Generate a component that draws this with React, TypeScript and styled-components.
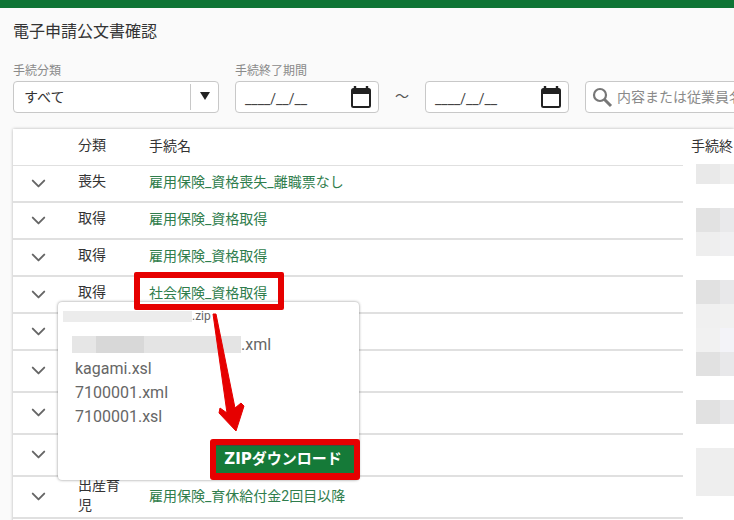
import React from "react";
import styled, { createGlobalStyle } from "styled-components";
import { ChevronDown } from "lucide-react";

const GlobalStyle = createGlobalStyle`
  html, body {
    margin: 0;
    padding: 0;
    background: #fafafa;
  }
  body {
    font-family: Roboto, "Noto Sans CJK JP", sans-serif;
    color: #333;
  }
`;

const Page = styled.div`
  position: relative;
  width: 734px;
  height: 520px;
  overflow: hidden;
  background: #fafafa;
`;

const TopBar = styled.div`
  height: 8px;
  background: #0f7435;
`;

const Content = styled.div`
  padding: 14px 0 0 13px;
`;

const Title = styled.h1`
  margin: 0;
  height: 20px;
  font-size: 16px;
  font-weight: 400;
  line-height: 20px;
  color: #333;
`;

const Filters = styled.div`
  display: flex;
  align-items: flex-end;
  margin-top: 23px;
  width: 900px;
`;

const Field = styled.div`
  display: flex;
  flex: none;
  flex-direction: column;
  margin-right: 16px;
`;

const Label = styled.label`
  height: 12px;
  margin-bottom: 4px;
  font-size: 12px;
  line-height: 12px;
  color: #8a8a8a;
`;

const InputBox = styled.div<{ $width: number }>`
  display: flex;
  align-items: center;
  box-sizing: border-box;
  width: ${(p) => p.$width}px;
  height: 32px;
  background: #fff;
  border: 1px solid #c8c8c8;
  border-radius: 4px;
`;

const SelectValue = styled.span`
  flex: 1;
  padding: 0 0 2px 10px;
  font-size: 14px;
  color: #333;
`;

const SelectArrow = styled.span`
  display: flex;
  align-items: center;
  justify-content: center;
  width: 27px;
  height: 26px;
  border-left: 1px solid #c8c8c8;
  &::after {
    content: "";
    margin-top: -3px;
    border-left: 5px solid transparent;
    border-right: 5px solid transparent;
    border-top: 8px solid #222;
  }
`;

const DateBox = styled(InputBox)`
  justify-content: space-between;
  padding: 0 6px 0 9px;
`;

const DateMask = styled.span`
  font-size: 14px;
  padding-top: 3px;
  color: #444;
`;

const Tilde = styled.span`
  flex: none;
  width: 46px;
  margin-left: -16px;
  height: 32px;
  line-height: 30px;
  text-align: center;
  font-size: 14px;
  color: #555;
`;

const SearchIcon = styled.svg`
  flex: none;
  margin-left: 5px;
`;

const SearchHint = styled.span`
  margin-left: 4px;
  padding-bottom: 2px;
  font-size: 14px;
  color: #8a8a8a;
  white-space: nowrap;
`;

const TableCard = styled.div`
  display: flex;
  margin-top: 16px;
  width: 721px;
  height: 400px;
  background: #fff;
  box-shadow: 0 0 3px rgba(0, 0, 0, 0.28);
`;

const MainColumn = styled.div`
  width: 670px;
  flex: none;
`;

const SideColumn = styled.div`
  flex: 1;
  overflow: hidden;
`;

const SideHead = styled.div`
  height: 35px;
  padding-left: 8px;
  font-size: 14px;
  line-height: 34px;
  white-space: nowrap;
  color: #333;
`;

const Mosaic = styled.div<{ $gap?: number; $h: number; $a: string; $b: string }>`
  margin: ${(p) => p.$gap ?? 0}px 0 0 13px;
  height: ${(p) => p.$h}px;
  background: linear-gradient(
    to right,
    ${(p) => p.$a} 0,
    ${(p) => p.$a} 24px,
    ${(p) => p.$b} 24px
  );
`;

const HeadRow = styled.div`
  display: flex;
  align-items: center;
  box-sizing: border-box;
  height: 37px;
  padding-bottom: 1px;
  border-bottom: 1px solid #e0e0e0;
  font-size: 14px;
  color: #333;
`;

const Row = styled.div<{ $tall?: boolean }>`
  display: flex;
  align-items: center;
  box-sizing: border-box;
  height: ${(p) => (p.$tall ? 42 : 37)}px;
  padding-bottom: 1px;
  border-bottom: 2px solid #e0e0e0;
  font-size: 14px;
  color: #333;
`;

const ExpandCell = styled.div`
  display: flex;
  justify-content: center;
  width: 50px;
  color: #666;
`;

const TypeCell = styled.div`
  width: 42px;
  margin: 0 29px 4px 15px;
  flex: none;
  line-height: 20px;
`;

const NameCell = styled.div`
  margin-bottom: 4px;
  color: #2f7d4c;
  white-space: nowrap;
`;

const HeadName = styled.div`
  margin-bottom: 4px;
  color: #333;
`;

const Callout = styled.div`
  position: absolute;
  left: 134px;
  top: 272px;
  box-sizing: border-box;
  width: 150px;
  height: 38px;
  border: 6px solid #e60000;
  border-radius: 2px;
`;

const Popup = styled.div`
  position: absolute;
  left: 58px;
  top: 302px;
  box-sizing: border-box;
  width: 301px;
  height: 178px;
  padding: 6px 5px 0 5px;
  background: #fff;
  border-radius: 4px;
  box-shadow: 0 0 3px rgba(0, 0, 0, 0.45);
`;

const ZipName = styled.div`
  display: flex;
  align-items: center;
  height: 16px;
  font-size: 12px;
  color: #666;
`;

const Redacted = styled.span<{ $w: number }>`
  display: inline-block;
  width: ${(p) => p.$w}px;
  height: 11px;
  background: #ececec;
`;

const FileList = styled.ul`
  list-style: none;
  margin: 8px 0 0;
  padding: 0 0 0 12px;
`;

const FileItem = styled.li`
  display: flex;
  align-items: center;
  height: 24px;
  font-size: 16px;
  color: #666;
`;

const RedactedName = styled.span`
  width: 169px;
  height: 17px;
  margin-left: -3px;
  background: linear-gradient(
    to right,
    #e6e6e6 0,
    #e6e6e6 24px,
    #d8d8d8 24px,
    #d8d8d8 72px,
    #e4e4e4 72px
  );
`;

const ZipButton = styled.button`
  position: absolute;
  right: -1px;
  bottom: 0;
  box-sizing: border-box;
  width: 150px;
  height: 41px;
  padding: 0 4px 3px 0;
  background: #157a38;
  border: 6px solid #e60000;
  border-bottom-width: 7px;
  border-radius: 3px;
  box-shadow: inset 0 1px 0 #3d4f3c;
  font-family: "DejaVu Sans", "Noto Sans CJK JP", sans-serif;
  font-size: 15px;
  font-weight: 700;
  color: #fff;
`;

const Arrow = styled.svg`
  position: absolute;
  left: 210px;
  top: 310px;
`;

const CalendarIcon = () => (
  <svg width="22" height="24" viewBox="0 0 22 24">
    <path d="M5 1v3M17 1v3" stroke="#222" strokeWidth="2.4" fill="none" />
    <rect x="2" y="4" width="18" height="18" rx="1.5" fill="none" stroke="#222" strokeWidth="2" />
    <rect x="2" y="4" width="18" height="5" fill="#222" />
  </svg>
);

type RowData = { type?: string; name?: string; tall?: boolean };

const rows: RowData[] = [
  { type: "喪失", name: "雇用保険_資格喪失_離職票なし" },
  { type: "取得", name: "雇用保険_資格取得" },
  { type: "取得", name: "雇用保険_資格取得" },
  { type: "取得", name: "社会保険_資格取得" },
  {},
  { tall: true },
  { tall: true },
  { tall: true },
  { type: "出産育児", name: "雇用保険_育休給付金2回目以降", tall: true },
];

const mosaics = [
  { $h: 20, $a: "#e9e9e9", $b: "#efefef" },
  { $gap: 24, $h: 24, $a: "#e2e2e2", $b: "#e9e9eb" },
  { $h: 24, $a: "#eeeeee", $b: "#f0f0f2" },
  { $gap: 24, $h: 24, $a: "#e1e1e1", $b: "#e8e8ea" },
  { $h: 24, $a: "#f0f0f0", $b: "#f1f1f1" },
  { $h: 24, $a: "#f1f1f1", $b: "#f3f3f8" },
  { $h: 24, $a: "#e1e1e1", $b: "#e8e8ea" },
  { $gap: 24, $h: 24, $a: "#e1e1e1", $b: "#e8e8ea" },
  { $gap: 24, $h: 48, $a: "#eeeeee", $b: "#eeeeee" },
];

export default function App() {
  return (
    <Page>
      <GlobalStyle />
      <TopBar />
      <Content>
        <Title>電子申請公文書確認</Title>
        <Filters>
          <Field>
            <Label>手続分類</Label>
            <InputBox $width={206}>
              <SelectValue>すべて</SelectValue>
              <SelectArrow />
            </InputBox>
          </Field>
          <Field>
            <Label>手続終了期間</Label>
            <DateBox $width={144}>
              <DateMask>____/__/__</DateMask>
              <CalendarIcon />
            </DateBox>
          </Field>
          <Tilde>～</Tilde>
          <Field>
            <DateBox $width={144}>
              <DateMask>____/__/__</DateMask>
              <CalendarIcon />
            </DateBox>
          </Field>
          <Field>
            <InputBox $width={220}>
              <SearchIcon width="22" height="22" viewBox="0 0 22 22">
                <circle cx="9" cy="9" r="6" fill="none" stroke="#777" strokeWidth="2.2" />
                <path d="M13.5 13.5 L20 20" stroke="#777" strokeWidth="3" />
              </SearchIcon>
              <SearchHint>内容または従業員名</SearchHint>
            </InputBox>
          </Field>
        </Filters>
        <TableCard>
          <MainColumn>
            <HeadRow>
              <ExpandCell />
              <TypeCell>分類</TypeCell>
              <HeadName>手続名</HeadName>
            </HeadRow>
            {rows.map((row, i) => (
              <Row key={i} $tall={row.tall}>
                <ExpandCell>
                  <ChevronDown size={23} strokeWidth={2} />
                </ExpandCell>
                <TypeCell>{row.type}</TypeCell>
                <NameCell>{row.name}</NameCell>
              </Row>
            ))}
          </MainColumn>
          <SideColumn>
            <SideHead>手続終</SideHead>
            {mosaics.map((m, i) => (
              <Mosaic key={i} {...m} />
            ))}
          </SideColumn>
        </TableCard>
      </Content>
      <Popup>
        <ZipName>
          <Redacted $w={129} />
          .zip
        </ZipName>
        <FileList>
          <FileItem>
            <RedactedName />
            .xml
          </FileItem>
          <FileItem>kagami.xsl</FileItem>
          <FileItem>7100001.xml</FileItem>
          <FileItem>7100001.xsl</FileItem>
        </FileList>
        <ZipButton>ZIPダウンロード</ZipButton>
      </Popup>
      <Callout />
      <Arrow width="40" height="125" viewBox="0 0 40 125">
        <path
          d="M3 4 L6 4 L25 98 L31 93 L34 96 L26 121 L9 103 L10 98 L17 103 Z"
          fill="#e60000"
          stroke="#e60000"
          strokeLinejoin="round"
        />
      </Arrow>
    </Page>
  );
}
